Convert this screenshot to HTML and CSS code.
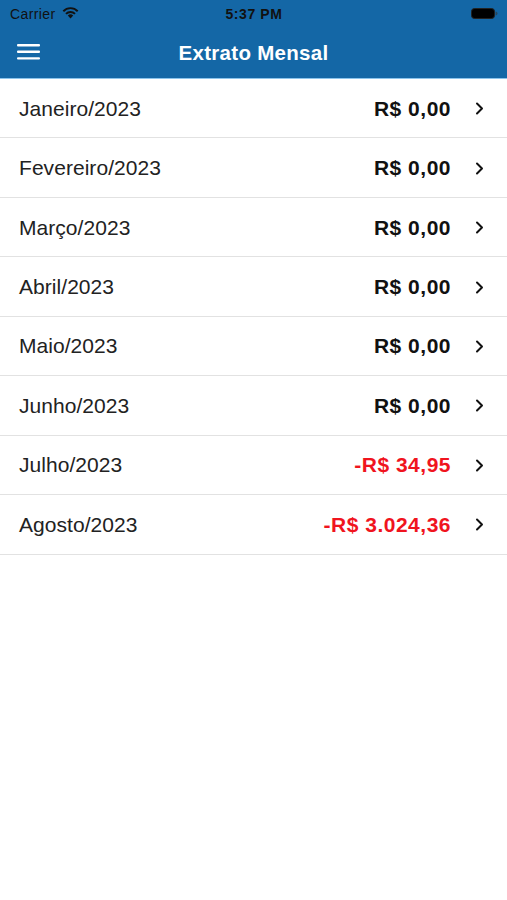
FILE: index.html
```html
<!DOCTYPE html>
<html lang="pt-BR">
<head>
<meta charset="utf-8">
<title>Extrato Mensal</title>
<link rel="stylesheet" href="styles.css">
</head>
<body>
<header class="top">
  <div class="status">
    <div class="status-left">
      <span class="carrier">Carrier</span>
      <svg class="wifi" width="17" height="13" viewBox="0 0 17 13">
        <path d="M8.5 12.5 L5.8 9.6 A3.9 3.9 0 0 1 11.2 9.6 Z" fill="#111"/>
        <path d="M3.3 7.2 A7.2 7.2 0 0 1 13.7 7.2 L12.3 8.6 A5.2 5.2 0 0 0 4.7 8.6 Z" fill="#111"/>
        <path d="M0.6 4.5 A11 11 0 0 1 16.4 4.5 L15 5.9 A9 9 0 0 0 2 5.9 Z" fill="#111"/>
      </svg>
    </div>
    <span class="time">5:37 PM</span>
    <div class="status-right">
      <svg class="battery" width="27" height="11" viewBox="0 0 27 11">
        <rect x="0.5" y="0.5" width="23" height="10" rx="3" fill="#000" stroke="#222" stroke-width="1"/>
        <path d="M24.5 3.5 a2 2 0 0 1 0 4 Z" fill="#333" opacity="0.6"/>
      </svg>
    </div>
  </div>
  <nav class="navbar">
    <svg class="menu" width="24" height="16" viewBox="0 0 24 16">
      <rect x="0" y="0" width="23" height="2.4" rx="1" fill="#fff"/>
      <rect x="0" y="6.6" width="23" height="2.4" rx="1" fill="#fff"/>
      <rect x="0" y="13.2" width="23" height="2.4" rx="1" fill="#fff"/>
    </svg>
    <h1 class="title">Extrato Mensal</h1>
  </nav>
</header>
<ul class="list">
  <li class="row"><span class="month">Janeiro/2023</span><span class="amount">R$ 0,00</span><span class="chev"><svg width="9" height="13" viewBox="0 0 9 13"><path d="M2 1.5 L7 6.5 L2 11.5" fill="none" stroke="#111" stroke-width="2" stroke-linecap="round" stroke-linejoin="round"/></svg></span></li>
  <li class="row"><span class="month">Fevereiro/2023</span><span class="amount">R$ 0,00</span><span class="chev"><svg width="9" height="13" viewBox="0 0 9 13"><path d="M2 1.5 L7 6.5 L2 11.5" fill="none" stroke="#111" stroke-width="2" stroke-linecap="round" stroke-linejoin="round"/></svg></span></li>
  <li class="row"><span class="month">Março/2023</span><span class="amount">R$ 0,00</span><span class="chev"><svg width="9" height="13" viewBox="0 0 9 13"><path d="M2 1.5 L7 6.5 L2 11.5" fill="none" stroke="#111" stroke-width="2" stroke-linecap="round" stroke-linejoin="round"/></svg></span></li>
  <li class="row"><span class="month">Abril/2023</span><span class="amount">R$ 0,00</span><span class="chev"><svg width="9" height="13" viewBox="0 0 9 13"><path d="M2 1.5 L7 6.5 L2 11.5" fill="none" stroke="#111" stroke-width="2" stroke-linecap="round" stroke-linejoin="round"/></svg></span></li>
  <li class="row"><span class="month">Maio/2023</span><span class="amount">R$ 0,00</span><span class="chev"><svg width="9" height="13" viewBox="0 0 9 13"><path d="M2 1.5 L7 6.5 L2 11.5" fill="none" stroke="#111" stroke-width="2" stroke-linecap="round" stroke-linejoin="round"/></svg></span></li>
  <li class="row"><span class="month">Junho/2023</span><span class="amount">R$ 0,00</span><span class="chev"><svg width="9" height="13" viewBox="0 0 9 13"><path d="M2 1.5 L7 6.5 L2 11.5" fill="none" stroke="#111" stroke-width="2" stroke-linecap="round" stroke-linejoin="round"/></svg></span></li>
  <li class="row"><span class="month">Julho/2023</span><span class="amount neg">-R$ 34,95</span><span class="chev"><svg width="9" height="13" viewBox="0 0 9 13"><path d="M2 1.5 L7 6.5 L2 11.5" fill="none" stroke="#111" stroke-width="2" stroke-linecap="round" stroke-linejoin="round"/></svg></span></li>
  <li class="row"><span class="month">Agosto/2023</span><span class="amount neg">-R$ 3.024,36</span><span class="chev"><svg width="9" height="13" viewBox="0 0 9 13"><path d="M2 1.5 L7 6.5 L2 11.5" fill="none" stroke="#111" stroke-width="2" stroke-linecap="round" stroke-linejoin="round"/></svg></span></li>
</ul>
</body>
</html>
```
FILE: styles.css
```css
* { box-sizing: border-box; }
html, body {
  margin: 0;
  padding: 0;
  background: #fff;
  font-family: "Liberation Sans", Arial, sans-serif;
}
.top {
  background: #1467a6;
  border-bottom: 1px solid #8cc4ec;
  height: 79px;
}
.status {
  height: 28px;
  display: flex;
  align-items: center;
  justify-content: space-between;
  padding: 0 9px 0 10px;
}
.status-left {
  display: flex;
  align-items: center;
  gap: 6px;
  width: 120px;
}
.carrier {
  font-size: 14px;
  letter-spacing: 0.4px;
  color: #111;
}
.wifi { margin-top: -4px; }
.time {
  font-size: 14px;
  font-weight: bold;
  letter-spacing: 0.6px;
  color: #111;
}
.status-right {
  width: 120px;
  display: flex;
  justify-content: flex-end;
}
.battery { margin-top: -2px; }
.navbar {
  height: 50px;
  display: flex;
  align-items: center;
  justify-content: center;
  position: relative;
}
.menu {
  position: absolute;
  left: 17px;
  top: 16px;
}
.title {
  margin: 0;
  font-size: 20.5px;
  font-weight: bold;
  letter-spacing: 0.3px;
  color: #fff;
}
.list {
  list-style: none;
  margin: 0;
  padding: 0;
}
.row {
  height: 59.45px;
  border-bottom: 1px solid #e2e2e2;
  display: flex;
  align-items: center;
  padding: 1px 23px 0 19px;
}
.month {
  flex: 1;
  font-size: 21px;
  letter-spacing: 0.05px;
  color: #222;
}
.amount {
  font-size: 21px;
  font-weight: bold;
  letter-spacing: 0.5px;
  color: #111;
}
.amount.neg { color: #f0141e; }
.chev {
  width: 33px;
  display: flex;
  justify-content: flex-end;
}
.chev svg { display: block; }
```
